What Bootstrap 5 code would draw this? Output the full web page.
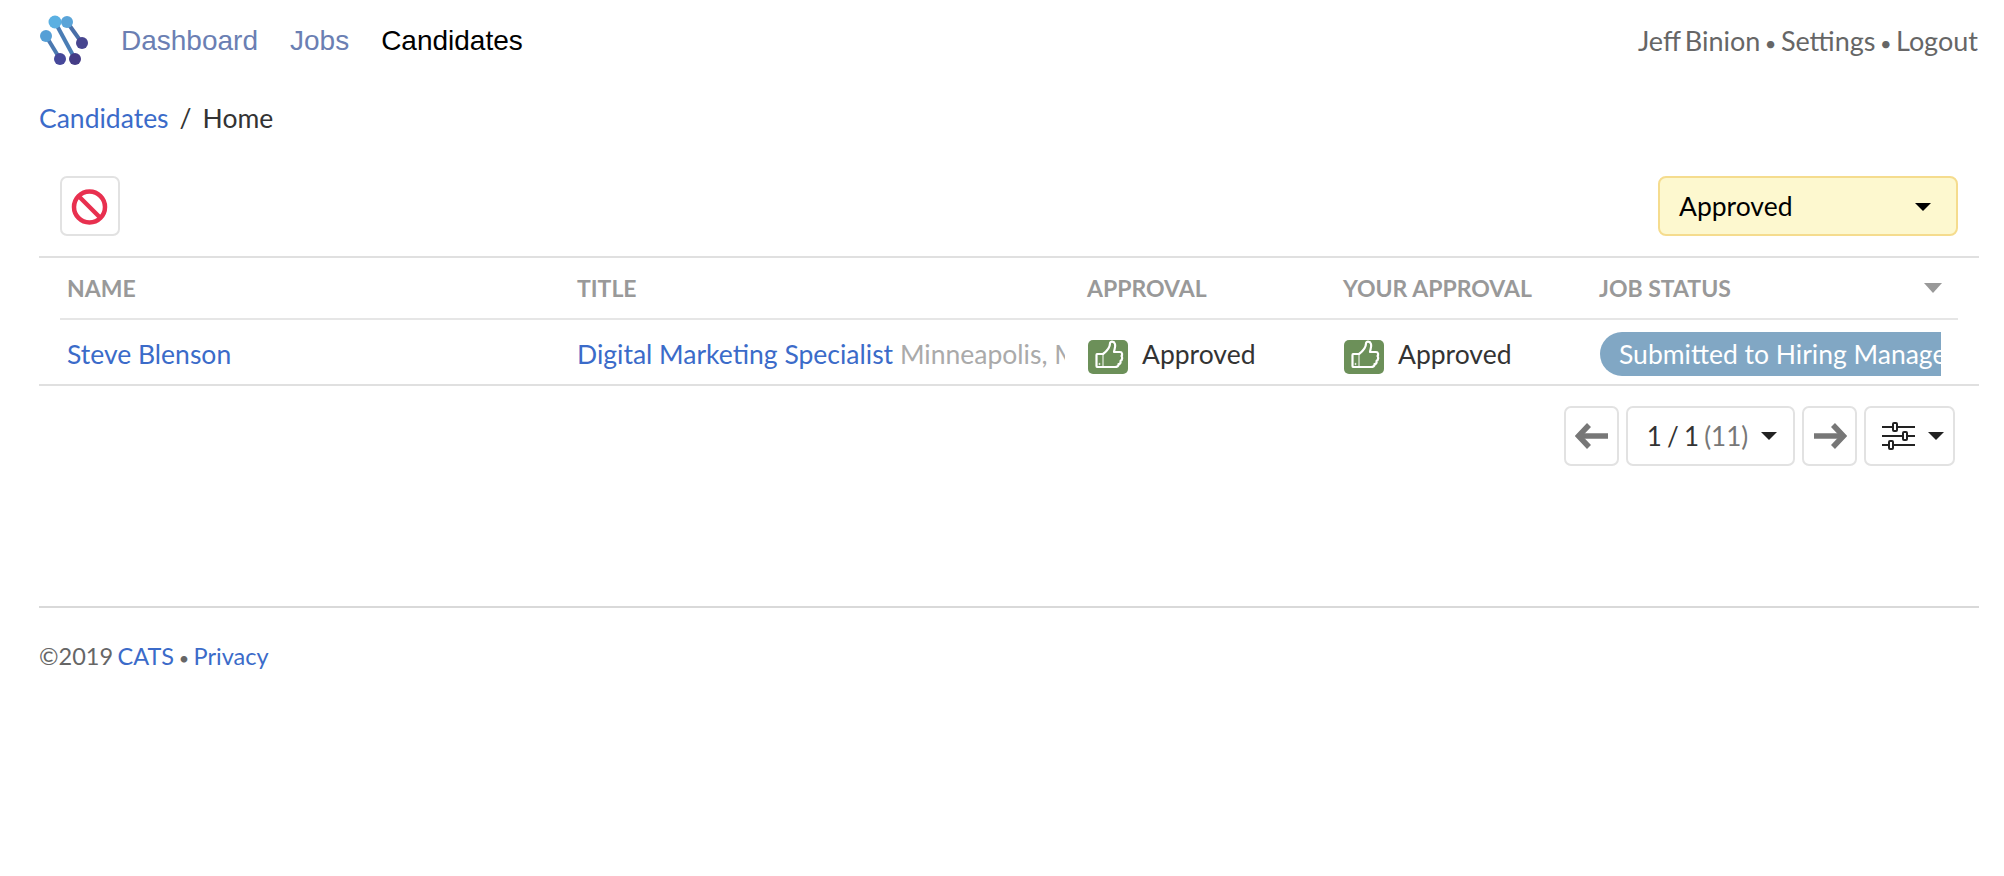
<!DOCTYPE html>
<html>

<head>
  <title>Candidates</title>
  <meta charset="UTF-8">
  <link href="https://cdn.jsdelivr.net/npm/bootstrap@5.3.3/dist/css/bootstrap.min.css" rel="stylesheet">
  <style>
    body { font-family: "Lato", "Noto Sans", sans-serif; font-size: 26.5px; color: #333; background: #fff; }
    a { text-decoration: none; color: #3b6bc9; }
    .page-wrap { padding: 0 25px 0 39px; }
    .top-nav { height: 80px; padding: 2px 0 0; }
    .brand-logo { width: 54px; height: 54px; margin-right: 31px; margin-left: -3px; }
    .main-links { font-family: "Liberation Sans", Arial, sans-serif; font-size: 28px; gap: 32px; }
    .main-links a { color: #6b7fb3; }
    .main-links a.active { color: #000; }
    .user-links { color: #666; font-size: 27px; word-spacing: -2.5px; margin-right: 1px; }
    .user-links a { color: #666; }
    .dot-sep { font-size: 20px; }
    .crumbs { --bs-breadcrumb-item-padding-x: 11px; height: 76px; margin: 0; padding: 2px 0 0; align-items: center; }
    .crumbs .breadcrumb-item.active { color: #333; }
    .crumbs .breadcrumb-item + .breadcrumb-item::before { color: #333; }
    .tool-row { height: 100px; padding: 20px 21px 20px 21px; }
    .plain-btn { background: #fff; border: 2px solid #e2e2e2; border-radius: 7px; height: 60px; padding: 0; display: flex; align-items: center; justify-content: center; color: #333; font-size: 26px; }
    .ban-btn { width: 60px; }
    .status-btn { width: 300px; height: 60px; background: #fdf8cf; border: 2px solid #f5dc8e; border-radius: 8px; color: #000; font-size: 26.5px; padding: 2px 25px 0 19px; }
    .status-btn:hover, .status-btn:active { background: #fdf8cf; border-color: #f5dc8e; color: #000; }
    .status-btn::after, .tri { display: inline-block; width: 0; height: 0; margin: 0; border-left: 8px solid transparent; border-right: 8px solid transparent; border-top: 8px solid #000; border-bottom: 0; }
    .list-wrap { border-top: 2px solid #e0e0e0; border-bottom: 2px solid #e0e0e0; padding: 0 21px; }
    .cand-table { table-layout: fixed; width: 100%; margin: 0; }
    .cand-table th { font-size: 23px; font-weight: 700; text-transform: uppercase; color: #999; height: 61px; padding: 0 8px 0 7px; border-bottom: 2px solid #e6e6e6; vertical-align: middle; }
    .cand-table td { height: 65px; padding: 6px 8px 0; border: 0; vertical-align: middle; white-space: nowrap; color: #333; }
    .cand-table td.text-cell { padding-left: 7px; }
    .cand-table td.pill-cell { padding: 4px 17px 0 8px; }
    .clip-text { overflow: hidden; margin-right: 7px; }
    .muted-loc { color: #aaa; }
    .thumb-box { width: 40px; height: 34px; border-radius: 5px; background: #6c9059; margin: 3px 14px 0 0; flex: none; }
    .status-pill { background: #81a7c4; color: #fff; height: 44px; line-height: 44px; padding: 0 19px; border-radius: 22px 0 0 22px; overflow: hidden; }
    .sort-tri { border-top-color: #999; border-left-width: 9px; border-right-width: 9px; border-top-width: 10px; margin-right: 8px; }
    .pager-row { padding: 20px 24px 0 0; gap: 7px; }
    .arrow-btn { width: 55px; }
    .page-btn { width: 169px; gap: 13px; padding-left: 3px; word-spacing: -1.5px; }
    .page-btn .tot { color: #777; }
    .tune-btn { width: 91px; gap: 13px; padding-left: 6px; }
    .small-tri { border-top-color: #222; }
    .foot-line { margin: 140px 0 0; border: 0; border-top: 2px solid #d9d9d9; opacity: 1; }
    .foot-text { color: #666; font-size: 23.5px; word-spacing: -1.5px; padding-top: 31px; }
    .foot-text .dot-sep { font-size: 18px; }
  </style>
</head>

<body>
  <div class="page-wrap">
    <nav class="navbar top-nav justify-content-between">
      <div class="d-flex align-items-center">
        <svg class="brand-logo" viewBox="0 0 54 54">
          <g stroke-width="4" fill="none">
            <path d="M19 8 L39 45" stroke="#4a7db5"></path>
            <path d="M31 8 L46 29" stroke="#4a6fa8"></path>
            <path d="M10 22 L24 45" stroke="#4a78b0"></path>
          </g>
          <circle cx="19" cy="8" r="6.5" fill="#5bb0e2"></circle>
          <circle cx="31" cy="8" r="6" fill="#5aa4d8"></circle>
          <circle cx="10" cy="22" r="6" fill="#569fd6"></circle>
          <circle cx="46" cy="29" r="6" fill="#47458f"></circle>
          <circle cx="24" cy="45" r="6" fill="#46489a"></circle>
          <circle cx="39" cy="45" r="6" fill="#443c86"></circle>
        </svg>
        <div class="main-links d-flex">
          <a href="#">Dashboard</a>
          <a href="#">Jobs</a>
          <a href="#" class="active">Candidates</a>
        </div>
      </div>
      <div class="user-links">Jeff Binion <span class="dot-sep">•</span> <a href="#">Settings</a> <span class="dot-sep">•</span> <a href="#">Logout</a></div>
    </nav>

    <ol class="breadcrumb crumbs">
      <li class="breadcrumb-item"><a href="#">Candidates</a></li>
      <li class="breadcrumb-item active">Home</li>
    </ol>

    <div class="tool-row d-flex justify-content-between">
      <button class="plain-btn ban-btn" type="button">
        <svg width="38" height="38" viewBox="0.5 -1 38 38" fill="none" stroke="#e8304f" stroke-width="4.5">
          <circle cx="19" cy="19" r="15.5"></circle>
          <path d="M8 8 L30 30"></path>
        </svg>
      </button>
      <button class="btn status-btn dropdown-toggle d-flex align-items-center justify-content-between" type="button">Approved</button>
    </div>

    <div class="list-wrap">
      <table class="table cand-table">
        <colgroup>
          <col style="width:510px">
          <col style="width:510px">
          <col style="width:256px">
          <col style="width:256px">
          <col>
        </colgroup>
        <thead>
          <tr>
            <th>Name</th>
            <th>Title</th>
            <th>Approval</th>
            <th>Your Approval</th>
            <th>
              <div class="d-flex justify-content-between align-items-center">Job Status<span class="tri sort-tri"></span></div>
            </th>
          </tr>
        </thead>
        <tbody>
          <tr>
            <td class="text-cell"><a href="#">Steve Blenson</a></td>
            <td class="text-cell"><div class="clip-text"><a href="#">Digital Marketing Specialist</a> <span class="muted-loc">Minneapolis, MN</span></div></td>
            <td>
              <div class="d-flex align-items-center">
                <svg class="thumb-box" viewBox="0 0 40 34" fill="none" stroke="#fff" stroke-width="2.2" stroke-linejoin="round">
                  <path d="M9 14 L15 14 C19 11 22 8 22 3.5 C22 1 26 1 27 4 C28 7 26 10 26 12 L32 12 C34.5 12 34.5 15 33.5 16 C34.5 17 34.5 20 32.5 21 C33 23 32 24 30.5 24 C31 26 29 27 27 27 L9 27 C8.5 27 8.5 26.5 8.5 26 L8.5 15 C8.5 14.5 8.5 14 9 14 Z"></path>
                  <path d="M15 14 L15 27" stroke-width="1"></path>
                  <circle cx="11.5" cy="24" r="0.6" stroke-width="1"></circle>
                </svg>
                Approved
              </div>
            </td>
            <td>
              <div class="d-flex align-items-center">
                <svg class="thumb-box" viewBox="0 0 40 34" fill="none" stroke="#fff" stroke-width="2.2" stroke-linejoin="round">
                  <path d="M9 14 L15 14 C19 11 22 8 22 3.5 C22 1 26 1 27 4 C28 7 26 10 26 12 L32 12 C34.5 12 34.5 15 33.5 16 C34.5 17 34.5 20 32.5 21 C33 23 32 24 30.5 24 C31 26 29 27 27 27 L9 27 C8.5 27 8.5 26.5 8.5 26 L8.5 15 C8.5 14.5 8.5 14 9 14 Z"></path>
                  <path d="M15 14 L15 27" stroke-width="1"></path>
                  <circle cx="11.5" cy="24" r="0.6" stroke-width="1"></circle>
                </svg>
                Approved
              </div>
            </td>
            <td class="pill-cell"><div class="status-pill">Submitted to Hiring Manager</div></td>
          </tr>
        </tbody>
      </table>
    </div>

    <div class="pager-row d-flex justify-content-end">
      <button class="plain-btn arrow-btn" type="button">
        <svg width="34" height="28" viewBox="0 0 34 28" fill="none" stroke="#777" stroke-width="5.5">
          <path d="M33 14 L4 14"></path>
          <path d="M14 3 L3.5 14 L14 25"></path>
        </svg>
      </button>
      <button class="plain-btn page-btn" type="button">
        <span>1 / 1 <span class="tot">(11)</span></span><span class="tri small-tri"></span>
      </button>
      <button class="plain-btn arrow-btn" type="button">
        <svg width="34" height="28" viewBox="0 0 34 28" fill="none" stroke="#777" stroke-width="5.5">
          <path d="M1 14 L30 14"></path>
          <path d="M20 3 L30.5 14 L20 25"></path>
        </svg>
      </button>
      <button class="plain-btn tune-btn" type="button">
        <svg width="33" height="30" viewBox="0 0 33 30" stroke="#222" stroke-width="2" fill="#fff">
          <path d="M0 6 H33 M0 15 H33 M0 24 H33"></path>
          <rect x="11" y="2" width="4" height="8" rx="1"></rect>
          <rect x="21" y="11" width="4" height="8" rx="1"></rect>
          <rect x="7" y="20" width="4" height="8" rx="1"></rect>
        </svg>
        <span class="tri small-tri"></span>
      </button>
    </div>

    <hr class="foot-line">
    <div class="foot-text">©2019 <a href="#">CATS</a> <span class="dot-sep">•</span> <a href="#">Privacy</a></div>
  </div>
  <script src="https://cdn.jsdelivr.net/npm/bootstrap@5.3.3/dist/js/bootstrap.bundle.min.js"></script>
</body>

</html>
